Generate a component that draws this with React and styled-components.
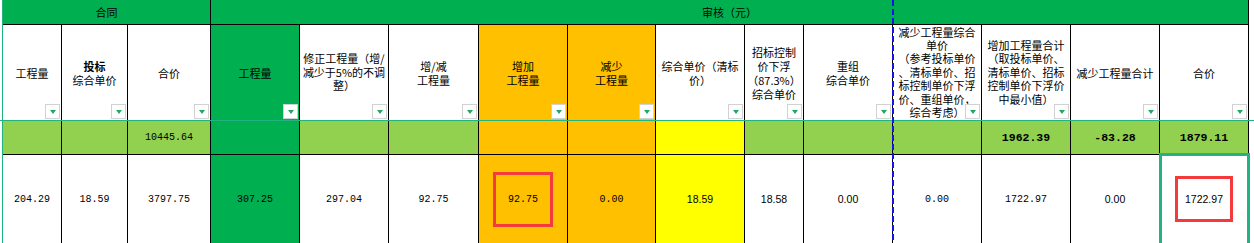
import styled, { createGlobalStyle } from 'styled-components';

const colors = {
  dark: '#00b050',
  light: '#92d050',
  orange: '#ffc000',
  yellow: '#ffff00',
  freeze: '#22b47e',
  filter: '#21a865',
};

const widths = [59, 66, 83, 89, 89, 90, 89, 88, 89, 59, 89, 89, 89, 89, 89];

const GlobalStyle = createGlobalStyle`
  body {
    margin: 0;
    background: #fff;
    font-family: "Noto Sans CJK SC", "Noto Sans", sans-serif;
    color: #000;
  }
`;

const Sheet = styled.div`
  position: relative;
  width: 1254px;
  height: 243px;
  overflow: hidden;
  padding-left: 3px;
  box-sizing: border-box;
`;

const Grid = styled.div`
  display: grid;
  grid-template-columns: ${widths.map((w) => `${w}px`).join(' ')};
  grid-template-rows: 25px 96px 34px 88px;
`;

const GroupCell = styled.div`
  grid-column: span ${({ $span }) => $span};
  background: ${colors.dark};
  border-right: 1px solid #000;
  border-bottom: 1px solid #000;
  display: flex;
  align-items: center;
  justify-content: center;
  font-size: 11px;
`;

const HeadCell = styled.div`
  position: relative;
  background: ${({ $bg }) => $bg || '#fff'};
  border-right: 1px solid #000;
  border-bottom: 1px solid #000;
  display: flex;
  flex-direction: column;
  align-items: center;
  justify-content: center;
  font-size: 11px;
  line-height: ${({ $lh }) => $lh || 14}px;
  text-align: center;
  overflow: hidden;
`;

const Line = styled.span`
  display: block;
  white-space: nowrap;
  font-weight: ${({ $bold }) => ($bold ? 700 : 400)};
`;

const FilterButton = styled.span`
  position: absolute;
  right: 1px;
  bottom: 1px;
  width: 15px;
  height: 15px;
  box-sizing: border-box;
  background: #fff;
  border: 1px solid #d2d2d2;
  display: flex;
  align-items: center;
  justify-content: center;

  &::after {
    content: '';
    width: 0;
    height: 0;
    border-left: 3.5px solid transparent;
    border-right: 3.5px solid transparent;
    border-top: 4px solid ${colors.filter};
  }
`;

const Cell = styled.div`
  position: relative;
  background: ${({ $bg }) => $bg || '#fff'};
  border-right: 1px solid #000;
  border-bottom: ${({ $last }) => ($last ? 'none' : '1px solid #000')};
  display: flex;
  align-items: center;
  justify-content: center;
  font-family: ${({ $sans }) =>
    $sans ? '"Liberation Sans", Arial, sans-serif' : '"Liberation Mono", monospace'};
  font-size: ${({ $sans, $bold }) => ($sans ? 10.5 : $bold ? 11.5 : 10)}px;
  font-weight: ${({ $bold }) => ($bold ? 700 : 400)};

  ${({ $selected }) =>
    $selected &&
    `
    &::after {
      content: '';
      position: absolute;
      top: -2px;
      left: -1px;
      right: -2px;
      bottom: -6px;
      border: 3px solid ${colors.freeze};
      pointer-events: none;
    }
  `}
`;

const Mark = styled.span`
  width: ${({ $w }) => $w}px;
  height: ${({ $h }) => $h}px;
  box-sizing: border-box;
  border: 3px solid #f43a3a;
  display: flex;
  align-items: center;
  justify-content: center;
`;

const FreezeLine = styled.div`
  position: absolute;
  background: ${colors.freeze};
  ${({ $vertical }) =>
    $vertical
      ? 'left: 2px; top: 0; bottom: 0; width: 1px;'
      : 'left: 0; right: 0; top: 120px; height: 1px;'}
`;

const PageBreak = styled.div`
  position: absolute;
  left: 892px;
  top: 0;
  bottom: 0;
  width: 2px;
  background: repeating-linear-gradient(to bottom, #1414e6 0 6px, transparent 6px 9px);
`;

const headers = [
  { lines: ['工程量'] },
  { lines: [{ text: '投标', bold: true }, '综合单价'] },
  { lines: ['合价'] },
  { lines: ['工程量'], bg: colors.dark },
  { lines: ['修正工程量（增/', '减少于5%的不调', '整）'], lh: 13.5 },
  { lines: ['增/减', '工程量'] },
  { lines: ['增加', '工程量'], bg: colors.orange },
  { lines: ['减少', '工程量'], bg: colors.orange },
  { lines: ['综合单价（清标', '价）'] },
  { lines: ['招标控制', '价下浮', '（87.3%）', '综合单价'] },
  { lines: ['重组', '综合单价'] },
  {
    lines: [
      '减少工程量综合',
      '单价',
      '（参考投标单价',
      '、清标单价、招',
      '标控制单价下浮',
      '价、重组单价，',
      '综合考虑）',
    ],
    lh: 13.4,
  },
  {
    lines: ['增加工程量合计', '（取投标单价、', '清标单价、招标', '控制单价下浮价', '中最小值）'],
    lh: 13.4,
  },
  { lines: ['减少工程量合计'] },
  { lines: ['合价'] },
];

const rowBg = (i, base) => {
  if (i === 3) return colors.dark;
  if (i === 6 || i === 7) return colors.orange;
  if (i === 8) return colors.yellow;
  return base;
};

const totals = ['', '', '10445.64', '', '', '', '', '', '', '', '', '', '1962.39', '-83.28', '1879.11'];

const data = [
  { v: '204.29' },
  { v: '18.59' },
  { v: '3797.75' },
  { v: '307.25' },
  { v: '297.04' },
  { v: '92.75' },
  { v: '92.75', mark: [60, 55] },
  { v: '0.00' },
  { v: '18.59', sans: true },
  { v: '18.58', sans: true },
  { v: '0.00', sans: true },
  { v: '0.00' },
  { v: '1722.97' },
  { v: '0.00', sans: true },
  { v: '1722.97', sans: true, mark: [58, 46], selected: true },
];

export default function App() {
  return (
    <>
      <GlobalStyle />
      <Sheet>
        <Grid>
          <GroupCell $span={3}>合同</GroupCell>
          <GroupCell $span={12}>审核（元）</GroupCell>

          {headers.map((h, i) => (
            <HeadCell key={`h${i}`} $bg={h.bg} $lh={h.lh}>
              {h.lines.map((l, j) =>
                typeof l === 'string' ? (
                  <Line key={j}>{l}</Line>
                ) : (
                  <Line key={j} $bold={l.bold}>
                    {l.text}
                  </Line>
                )
              )}
              <FilterButton />
            </HeadCell>
          ))}

          {totals.map((t, i) => (
            <Cell key={`t${i}`} $bg={rowBg(i, colors.light)} $bold={i >= 12}>
              {t}
            </Cell>
          ))}

          {data.map((d, i) => (
            <Cell
              key={`d${i}`}
              $bg={rowBg(i, '#fff')}
              $sans={d.sans}
              $selected={d.selected}
              $last
            >
              {d.mark ? (
                <Mark $w={d.mark[0]} $h={d.mark[1]}>
                  {d.v}
                </Mark>
              ) : (
                d.v
              )}
            </Cell>
          ))}
        </Grid>
        <FreezeLine $vertical />
        <FreezeLine />
        <PageBreak />
      </Sheet>
    </>
  );
}
